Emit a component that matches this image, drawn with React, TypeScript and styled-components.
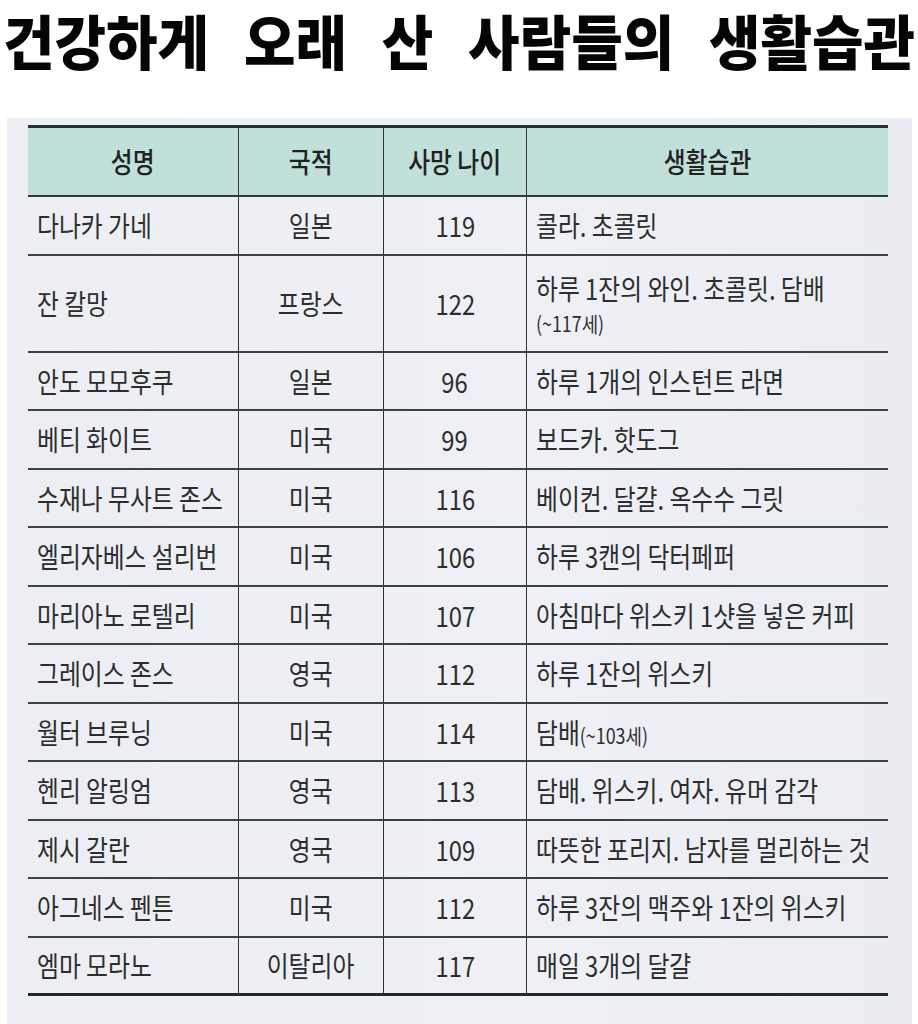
import React from 'react';
import styled, { createGlobalStyle } from 'styled-components';

const GlobalStyle = createGlobalStyle`
  *, *::before, *::after { box-sizing: border-box; }
  html, body { margin: 0; padding: 0; background: #ffffff; }
  body {
    font-family: "Noto Sans CJK KR", "Noto Sans", sans-serif;
    color: #2e2e2e;
  }
`;

const Page = styled.div`
  width: 918px;
  height: 1024px;
  overflow: hidden;
  display: flex;
  flex-direction: column;
  background: #ffffff;
`;

const TitleBar = styled.header`
  height: 118px;
  padding: 10px 0 0 3px;
`;

const Title = styled.h1`
  margin: 0;
  display: inline-block;
  font-size: 56px;
  font-weight: 900;
  line-height: 1;
  color: #050505;
  white-space: nowrap;
  word-spacing: 22px;
  transform: scaleY(1.06);
  transform-origin: left top;
`;

const Paper = styled.section`
  flex: 1;
  margin: 0 6px 0 7px;
  padding: 7px 0 0 21px;
  background: linear-gradient(90deg, #eceef3 0%, #eef0f5 60%, #ebedf2 100%);
`;

const Table = styled.div`
  width: 860px;
  display: flex;
  flex-direction: column;
`;

const cols = '210px 145px 143px 362px';

const HeadRow = styled.div`
  display: grid;
  grid-template-columns: ${cols};
  height: 72px;
  border-top: 3px solid #24332f;
  border-bottom: 2px solid #353a38;
  background: #c1e0da;
`;

const Row = styled.div<{ $tall?: boolean; $last?: boolean }>`
  display: grid;
  grid-template-columns: ${cols};
  height: ${(p) => (p.$tall ? 97 : 58.5)}px;
  border-bottom: ${(p) => (p.$last ? '3px solid #222a28' : '2px solid #3d4141')};
`;

const Cell = styled.div<{ $align?: 'left' | 'center' }>`
  display: flex;
  align-items: center;
  justify-content: ${(p) => (p.$align === 'center' ? 'center' : 'flex-start')};
  padding: 0 ${(p) => (p.$align === 'center' ? '0' : '9px')};
  border-left: 1.5px solid #303434;
  &:first-child { border-left: none; }
`;

const Text = styled.span<{ $align?: 'left' | 'center'; $head?: boolean }>`
  display: inline-block;
  font-size: 28px;
  line-height: 1.3;
  font-weight: ${(p) => (p.$head ? 500 : 400)};
  color: ${(p) => (p.$head ? '#1f2221' : '#2c2e2e')};
  white-space: nowrap;
  transform: scaleX(0.85);
  transform-origin: ${(p) => (p.$align === 'center' ? 'center' : 'left')} center;
`;

const Lines = styled.div`
  display: flex;
  flex-direction: column;
  gap: 5px;
`;

const Small = styled.span<{ $size?: number }>`
  font-size: ${(p) => p.$size ?? 21}px;
  line-height: 1.2;
`;

type Item = {
  name: string;
  nation: string;
  age: string;
  habit: React.ReactNode;
  tall?: boolean;
};

const items: Item[] = [
  { name: '다나카 가네', nation: '일본', age: '119', habit: '콜라. 초콜릿' },
  {
    name: '잔 칼망',
    nation: '프랑스',
    age: '122',
    tall: true,
    habit: (
      <Lines>
        <span>하루 1잔의 와인. 초콜릿. 담배</span>
        <Small>(~117세)</Small>
      </Lines>
    ),
  },
  { name: '안도 모모후쿠', nation: '일본', age: '96', habit: '하루 1개의 인스턴트 라면' },
  { name: '베티 화이트', nation: '미국', age: '99', habit: '보드카. 핫도그' },
  { name: '수재나 무사트 존스', nation: '미국', age: '116', habit: '베이컨. 달걀. 옥수수 그릿' },
  { name: '엘리자베스 설리번', nation: '미국', age: '106', habit: '하루 3캔의 닥터페퍼' },
  { name: '마리아노 로텔리', nation: '미국', age: '107', habit: '아침마다 위스키 1샷을 넣은 커피' },
  { name: '그레이스 존스', nation: '영국', age: '112', habit: '하루 1잔의 위스키' },
  {
    name: '월터 브루닝',
    nation: '미국',
    age: '114',
    habit: (
      <>
        담배<Small $size={21}>(~103세)</Small>
      </>
    ),
  },
  { name: '헨리 알링엄', nation: '영국', age: '113', habit: '담배. 위스키. 여자. 유머 감각' },
  { name: '제시 갈란', nation: '영국', age: '109', habit: '따뜻한 포리지. 남자를 멀리하는 것' },
  { name: '아그네스 펜튼', nation: '미국', age: '112', habit: '하루 3잔의 맥주와 1잔의 위스키' },
  { name: '엠마 모라노', nation: '이탈리아', age: '117', habit: '매일 3개의 달걀' },
];

export default function App() {
  return (
    <Page>
      <GlobalStyle />
      <TitleBar>
        <Title>건강하게 오래 산 사람들의 생활습관</Title>
      </TitleBar>
      <Paper>
        <Table>
          <HeadRow>
            <Cell $align="center"><Text $head $align="center">성명</Text></Cell>
            <Cell $align="center"><Text $head $align="center">국적</Text></Cell>
            <Cell $align="center"><Text $head $align="center">사망 나이</Text></Cell>
            <Cell $align="center"><Text $head $align="center">생활습관</Text></Cell>
          </HeadRow>
          {items.map((it, i) => (
            <Row key={it.name} $tall={it.tall} $last={i === items.length - 1}>
              <Cell><Text>{it.name}</Text></Cell>
              <Cell $align="center"><Text $align="center">{it.nation}</Text></Cell>
              <Cell $align="center"><Text $align="center">{it.age}</Text></Cell>
              <Cell><Text>{it.habit}</Text></Cell>
            </Row>
          ))}
        </Table>
      </Paper>
    </Page>
  );
}
